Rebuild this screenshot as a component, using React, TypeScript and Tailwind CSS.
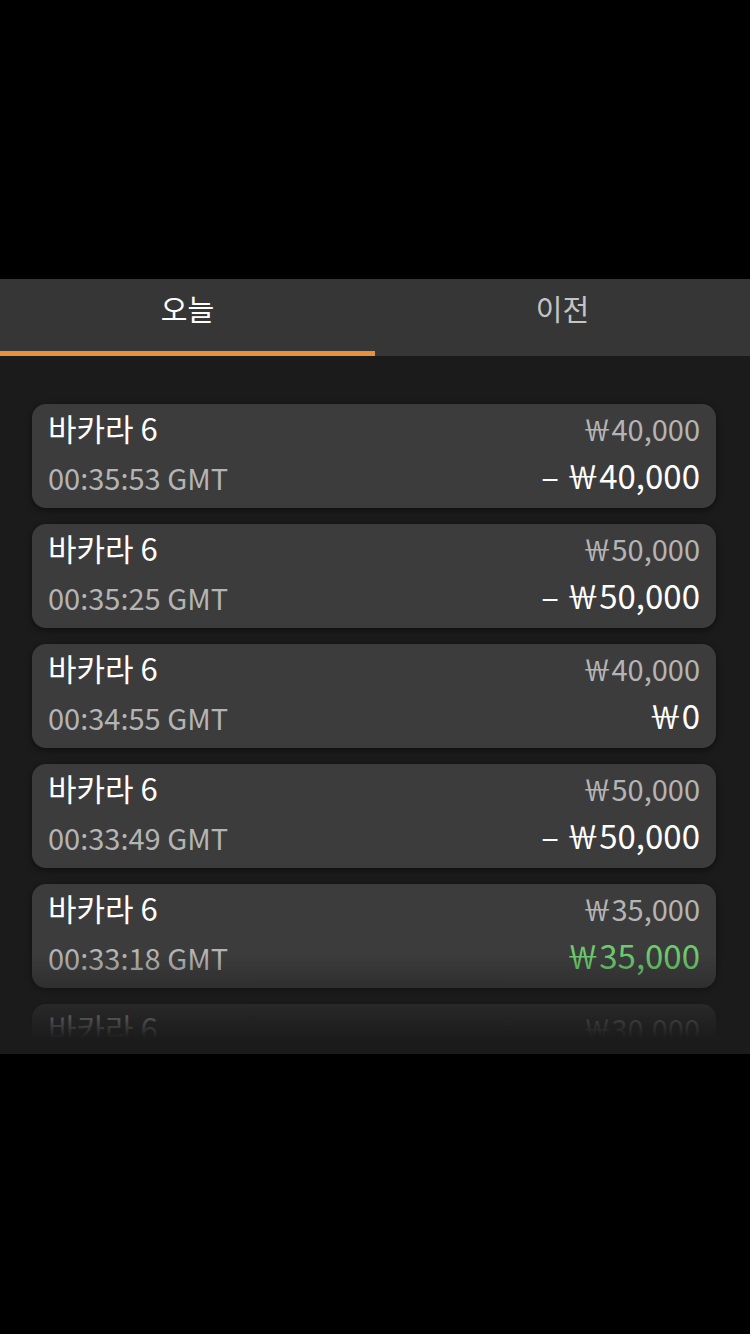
import { useState } from 'react';

type Row = { game: string; time: string; bet: string; result: string; tone: 'lose' | 'even' | 'win' };

const rows: Row[] = [
  { game: '바카라 6', time: '00:35:53 GMT', bet: '￦40,000', result: '– ￦40,000', tone: 'lose' },
  { game: '바카라 6', time: '00:35:25 GMT', bet: '￦50,000', result: '– ￦50,000', tone: 'lose' },
  { game: '바카라 6', time: '00:34:55 GMT', bet: '￦40,000', result: '￦0', tone: 'even' },
  { game: '바카라 6', time: '00:33:49 GMT', bet: '￦50,000', result: '– ￦50,000', tone: 'lose' },
  { game: '바카라 6', time: '00:33:18 GMT', bet: '￦35,000', result: '￦35,000', tone: 'win' },
  { game: '바카라 6', time: '00:32:40 GMT', bet: '￦30,000', result: '– ￦30,000', tone: 'lose' },
];

const font = { fontFamily: '"Noto Sans CJK KR", "Noto Sans", sans-serif' };

export default function App() {
  const [tab, setTab] = useState<'today' | 'before'>('today');

  return (
    <div className="flex h-[1334px] w-[750px] flex-col bg-black" style={font}>
      <div className="h-[279px]" />

      <div className="flex h-[77px] bg-[#363636]">
        <button
          className={`flex-1 border-b-[5px] pb-[12px] text-[29px] ${
            tab === 'today' ? 'border-[#e8913b] text-white' : 'border-transparent text-[#c4c4c4]'
          }`}
          onClick={() => setTab('today')}
        >
          오늘
        </button>
        <button
          className={`flex-1 border-b-[5px] pb-[12px] text-[29px] ${
            tab === 'before' ? 'border-[#e8913b] text-white' : 'border-transparent text-[#c4c4c4]'
          }`}
          onClick={() => setTab('before')}
        >
          이전
        </button>
      </div>

      <div className="bg-[#1b1b1b] pb-4">
        <div className="relative h-[682px] overflow-hidden">
          <div className="flex flex-col gap-4 pl-8 pr-[34px] pt-12">
            {rows.map((r, i) => (
              <div
                key={i}
                className="flex h-[104px] shrink-0 justify-between rounded-[14px] bg-[#3c3c3c] px-4 pt-[2px] shadow-[0_2px_6px_rgba(0,0,0,0.5)]"
              >
                <div className="flex flex-col">
                  <span className="text-[31px] leading-[44px] text-white">{r.game}</span>
                  <span className="mt-[6px] text-[29px] leading-[42px] text-[#b4b4b4]">{r.time}</span>
                </div>
                <div className="flex flex-col items-end">
                  <span className="text-[29px] leading-[44px] text-[#b4b4b4]">{r.bet}</span>
                  <span
                    className={`mt-[2px] text-[33px] leading-[46px] ${
                      r.tone === 'win' ? 'text-[#6ccb6c]' : 'text-white'
                    }`}
                  >
                    {r.result}
                  </span>
                </div>
              </div>
            ))}
          </div>
          <div className="pointer-events-none absolute inset-x-0 bottom-0 h-[84px] bg-gradient-to-b from-transparent via-[#1b1b1b]/50 to-[#1b1b1b]" />
        </div>
      </div>

      <div className="flex-1 bg-black" />
    </div>
  );
}
